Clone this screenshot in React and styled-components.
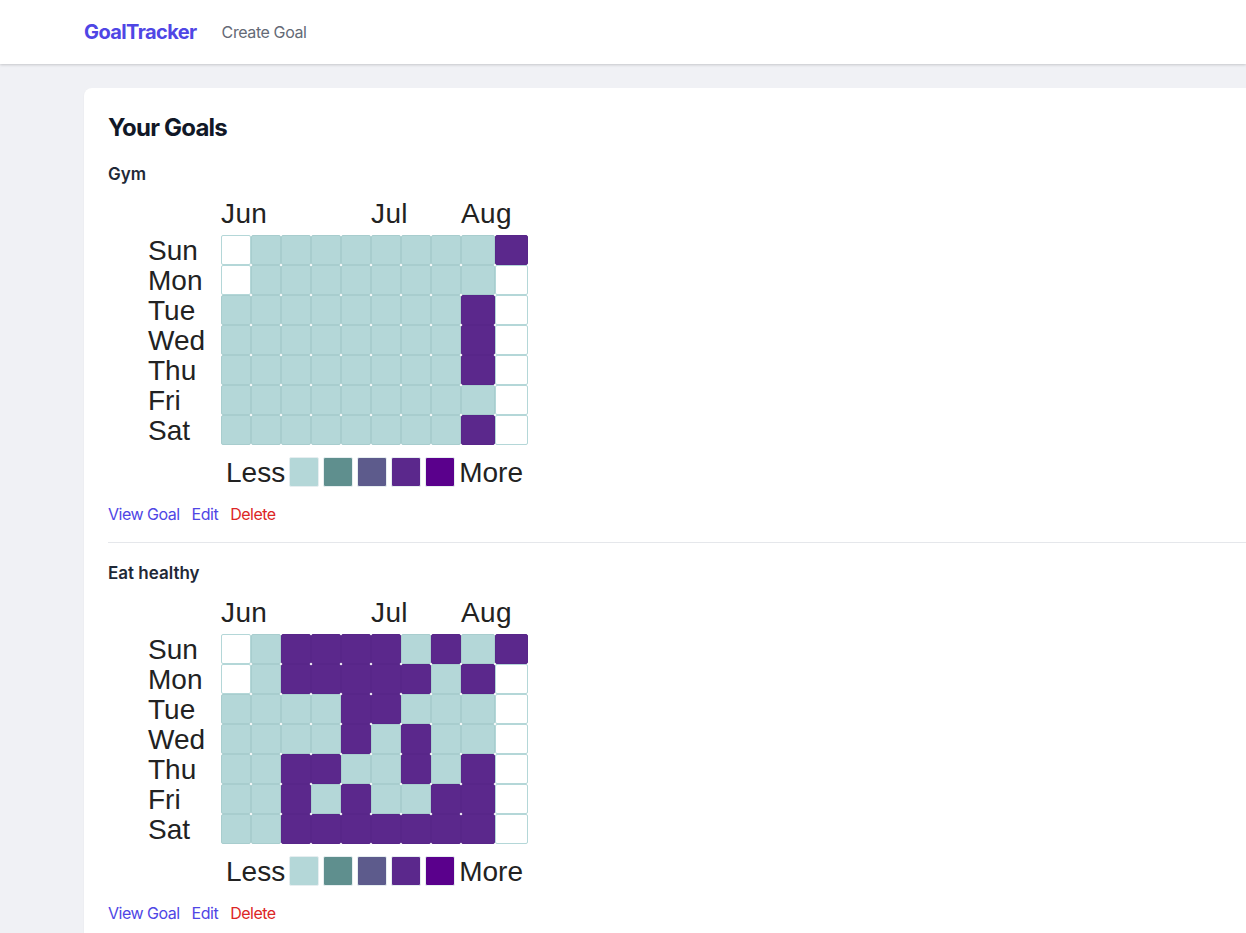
import React from 'react';
import styled, { createGlobalStyle } from 'styled-components';

const GlobalStyle = createGlobalStyle`
  * {
    box-sizing: border-box;
  }
  body {
    margin: 0;
    background: #f0f1f5;
    font-family: Inter, "Noto Sans", sans-serif;
    overflow: hidden;
  }
`;

const Nav = styled.nav`
  height: 64px;
  background: #ffffff;
  box-shadow: 0 1px 3px rgba(0, 0, 0, 0.12), 0 1px 2px rgba(0, 0, 0, 0.06);
  display: flex;
  align-items: center;
  padding-left: 84px;
  gap: 25px;
  position: relative;
`;

const Brand = styled.span`
  font-size: 20px;
  font-weight: 700;
  color: #4f46e5;
  letter-spacing: -0.6px;
`;

const NavLink = styled.span`
  font-size: 16px;
  color: #646a76;
  letter-spacing: -0.4px;
`;

const Main = styled.main`
  padding: 24px 0 0 84px;
`;

const Card = styled.section`
  width: 1220px;
  min-height: 900px;
  background: #ffffff;
  border-radius: 8px;
  padding: 24px;
  box-shadow: 0 1px 2px rgba(0, 0, 0, 0.05);
`;

const Title = styled.h1`
  margin: 0 0 18px;
  font-size: 24px;
  line-height: 32px;
  font-weight: 700;
  color: #111827;
  letter-spacing: -0.8px;
`;

const GoalItem = styled.div`
  padding: ${({ $first }) => ($first ? '0' : '18px')} 0 16px;
  border-bottom: 1px solid #e5e7eb;
`;

const GoalName = styled.h2`
  margin: 0;
  font-size: 17px;
  line-height: 24px;
  font-weight: 600;
  color: #1f2937;
`;

const Heatmap = styled.div`
  margin: 12px 0 0 40px;
  display: grid;
  grid-template-columns: 73px max-content;
  font-family: "Liberation Sans", Arial, sans-serif;
  font-size: 28px;
  color: #222222;
`;

const columns = 'repeat(8, 30px) 34px 33px';

const MonthRow = styled.div`
  grid-column: 2;
  height: 37px;
  display: grid;
  grid-template-columns: ${columns};
`;

const Month = styled.span`
  grid-column: ${({ $col }) => $col + 1};
  line-height: 30px;
  padding-top: 1px;
  white-space: nowrap;
  letter-spacing: 0.4px;
`;

const DayLabels = styled.div`
  grid-column: 1;
  display: flex;
  flex-direction: column;
`;

const Day = styled.span`
  height: 30px;
  line-height: 30px;
  padding-top: 1px;
`;

const CellGrid = styled.div`
  grid-column: 2;
  display: grid;
  grid-template-columns: ${columns};
  grid-auto-rows: 30px;
`;

const cellColors = {
  '.': { fill: '#ffffff', edge: '#b4d7d8' },
  l: { fill: '#b4d7d8', edge: '#a8cdce' },
  p: { fill: '#5b288c', edge: '#582689' },
};

const Cell = styled.div`
  background: ${({ $level }) => cellColors[$level].fill};
  border: 1px solid ${({ $level }) => cellColors[$level].edge};
  border-radius: 2px;
`;

const Legend = styled.div`
  grid-column: 2;
  margin: 12px 0 0 5px;
  height: 30px;
  display: flex;
  align-items: center;
  gap: 4px;
  line-height: 30px;
  padding-top: 1px;
`;

const Swatch = styled.span`
  width: 30px;
  height: 30px;
  margin-top: -1px;
  border-radius: 2px;
  border: 1px solid #e6eef0;
  background: ${({ $color }) => $color};
`;

const Actions = styled.div`
  margin-top: 15px;
  display: flex;
  gap: 12px;
  font-size: 16px;
  line-height: 24px;
  letter-spacing: -0.5px;
`;

const Action = styled.a`
  color: ${({ $danger }) => ($danger ? '#dc2626' : '#4f46e5')};
  text-decoration: none;
  cursor: pointer;
`;

const days = ['Sun', 'Mon', 'Tue', 'Wed', 'Thu', 'Fri', 'Sat'];
const months = [
  { label: 'Jun', col: 0 },
  { label: 'Jul', col: 5 },
  { label: 'Aug', col: 8 },
];
const legendColors = ['#b4d7d8', '#5f8f8e', '#5d5b8c', '#5b288c', '#5a008c'];

const goals = [
  {
    name: 'Gym',
    rows: [
      '.llllllllp',
      '.llllllll.',
      'llllllllp.',
      'llllllllp.',
      'llllllllp.',
      'lllllllll.',
      'llllllllp.',
    ],
  },
  {
    name: 'Eat healthy',
    rows: [
      '.lpppplplp',
      '.lppppplp.',
      'llllpplll.',
      'llllplpll.',
      'llppllplp.',
      'llplpllpp.',
      'llppppppp.',
    ],
  },
];

const GoalHeatmap = ({ rows }) => (
  <Heatmap>
    <MonthRow>
      {months.map((m) => (
        <Month key={m.label} $col={m.col}>
          {m.label}
        </Month>
      ))}
    </MonthRow>
    <DayLabels>
      {days.map((d) => (
        <Day key={d}>{d}</Day>
      ))}
    </DayLabels>
    <CellGrid>
      {rows.map((row, r) =>
        row.split('').map((level, c) => <Cell key={`${r}-${c}`} $level={level} />)
      )}
    </CellGrid>
    <Legend>
      <span>Less</span>
      {legendColors.map((color) => (
        <Swatch key={color} $color={color} />
      ))}
      <span>More</span>
    </Legend>
  </Heatmap>
);

const App = () => (
  <>
    <GlobalStyle />
    <Nav>
      <Brand>GoalTracker</Brand>
      <NavLink>Create Goal</NavLink>
    </Nav>
    <Main>
      <Card>
        <Title>Your Goals</Title>
        {goals.map((goal, i) => (
          <GoalItem key={goal.name} $first={i === 0}>
            <GoalName>{goal.name}</GoalName>
            <GoalHeatmap rows={goal.rows} />
            <Actions>
              <Action>View Goal</Action>
              <Action>Edit</Action>
              <Action $danger>Delete</Action>
            </Actions>
          </GoalItem>
        ))}
      </Card>
    </Main>
  </>
);

export default App;
